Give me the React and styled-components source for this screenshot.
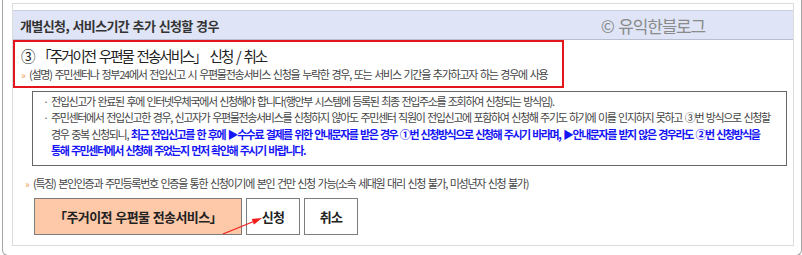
import React from 'react'
import styled, { createGlobalStyle } from 'styled-components'

const GlobalStyle = createGlobalStyle`
    body {
        margin: 0;
        background: #fff;
        font-family: "Noto Sans CJK KR", "Noto Sans", sans-serif;
    }
`;

const Frame = styled.div`
    width: 800px;
    margin-left: 2px;
    box-sizing: border-box;
    border: 1px solid #a3a3a3;
    border-top: none;
    border-radius: 0 0 6px 6px;
    padding: 3px 7px 9px 9px;
`;

const Panel = styled.div`
    border: 1px solid #dcdcdc;
    padding-top: 6px;
    padding-bottom: 10px;
`;

const HeaderBand = styled.div`
    height: 28px;
    display: flex;
    align-items: center;
    justify-content: space-between;
    background: #dfe5f6;
    border-top: 1px solid #c9d0e2;
    border-bottom: 1px solid #b8bfd0;
    padding: 0 88px 0 7px;
`;

const HeaderTitle = styled.div`
    font-size: 13px;
    font-weight: 700;
    color: #333;
    letter-spacing: -0.6px;
    word-spacing: 1px;
`;

const Watermark = styled.div`
    font-size: 17px;
    color: #8a8a8a;
    letter-spacing: -1.2px;
    word-spacing: 2px;
`;

const RedBox = styled.div`
    width: 541px;
    height: 44px;
    border: 2px solid #e4161b;
    padding-left: 6px;
    display: flex;
    flex-direction: column;
    justify-content: center;
`;

const Title = styled.div`
    font-size: 14.5px;
    color: #222;
    line-height: 20px;
    letter-spacing: -2px;
    word-spacing: 2.5px;
`;

const Line = styled.div`
    display: flex;
    align-items: baseline;
    font-size: 11px;
    line-height: 16px;
    color: #444;
    letter-spacing: ${p => p.$ls ?? -1.35}px;
    word-spacing: 1.5px;
    white-space: nowrap;
    margin-left: ${p => p.$indent || 0}px;
    margin-top: ${p => p.$top || 0}px;
`;

const Chevron = styled.span`
    color: #f0a45a;
    font-size: 10px;
    width: 8px;
    letter-spacing: 0;
`;

const NoticeBox = styled.div`
    margin: 3px 6px 0 19px;
    border: 1px solid #666;
    padding: 1px 0 7px 10px;
`;

const Item = styled.div`
    display: flex;
    font-size: 11px;
    line-height: 16.3px;
    color: #444;
    letter-spacing: -1.35px;
    word-spacing: 1.5px;
    white-space: nowrap;
`;

const Dot = styled.span`
    width: 8px;
    flex: none;
    color: #666;
`;

const Blue = styled.span`
    color: #1515f5;
    font-weight: 700;
    letter-spacing: -1.45px;
`;

const ButtonRow = styled.div`
    position: relative;
    display: flex;
    gap: 4px;
    margin: 6px 0 0 21px;
`;

const Btn = styled.div`
    height: 35px;
    width: ${p => p.$w}px;
    box-sizing: content-box;
    border: 1px solid #7c7c7c;
    background: ${p => (p.$accent ? '#fdc9a9' : '#fff')};
    display: flex;
    align-items: center;
    justify-content: center;
    font-size: 13px;
    font-weight: 700;
    color: #222;
    letter-spacing: ${p => (p.$accent ? -0.6 : -0.8)}px;
    word-spacing: 1px;
`;

const Arrow = styled.svg`
    position: absolute;
    left: 180px;
    top: 9px;
    pointer-events: none;
`;

export default function App() {
    return (
        <>
            <GlobalStyle />
            <Frame>
                <Panel>
                    <HeaderBand>
                        <HeaderTitle>개별신청, 서비스기간 추가 신청할 경우</HeaderTitle>
                        <Watermark>© 유익한블로그</Watermark>
                    </HeaderBand>
                    <RedBox>
                        <Title>③ 「주거이전 우편물 전송서비스」 신청 / 취소</Title>
                        <Line $ls={-1.25}>
                            <Chevron>»</Chevron>
                            (설명) 주민센터나 정부24에서 전입신고 시 우편물전송서비스 신청을 누락한 경우, 또는 서비스 기간을 추가하고자 하는 경우에 사용
                        </Line>
                    </RedBox>
                    <NoticeBox>
                        <Item>
                            <Dot>·</Dot>
                            <span>전입신고가 완료된 후에 인터넷우체국에서 신청해야 합니다(행안부 시스템에 등록된 최종 전입주소를 조회하여 신청되는 방식임).</span>
                        </Item>
                        <Item>
                            <Dot>·</Dot>
                            <span>
                                주민센터에서 전입신고한 경우, 신고자가 우편물전송서비스를 신청하지 않아도 주민센터 직원이 전입신고에 포함하여 신청해 주기도 하기에 이를 인지하지 못하고 ③번 방식으로 신청할
                                <br />
                                경우 중복 신청되니, <Blue>최근 전입신고를 한 후에 ▶수수료 결제를 위한 안내문자를 받은 경우 ①번 신청방식으로 신청해 주시기 바라며, ▶안내문자를 받지 않은 경우라도 ②번 신청방식을</Blue>
                                <br />
                                <Blue>통해 주민센터에서 신청해 주었는지 먼저 확인해 주시기 바랍니다.</Blue>
                            </span>
                        </Item>
                    </NoticeBox>
                    <Line $indent={12} $top={9} $ls={-1.3}>
                        <Chevron>»</Chevron>
                        (특징) 본인인증과 주민등록번호 인증을 통한 신청이기에 본인 건만 신청 가능(소속 세대원 대리 신청 불가, 미성년자 신청 불가)
                    </Line>
                    <ButtonRow>
                        <Btn $accent $w={206}>「주거이전 우편물 전송서비스」</Btn>
                        <Btn $w={52}>신청</Btn>
                        <Btn $w={52}>취소</Btn>
                        <Arrow width="60" height="40" viewBox="0 0 60 40">
                            <line x1="9" y1="27" x2="39" y2="14.8" stroke="#f01c1c" strokeWidth="1.2" />
                            <polygon points="48,11 39.9,17.6 37.7,12" fill="#f01c1c" />
                        </Arrow>
                    </ButtonRow>
                </Panel>
            </Frame>
        </>
    )
}
